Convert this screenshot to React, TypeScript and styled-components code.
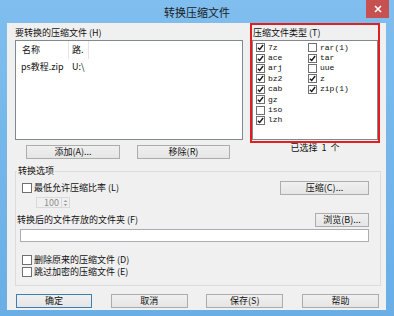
import styled, { createGlobalStyle } from 'styled-components';

const GlobalStyle = createGlobalStyle`
  html, body {
    margin: 0;
    padding: 0;
  }
  body {
    width: 394px;
    height: 316px;
    overflow: hidden;
    font-family: "Noto Sans CJK SC", "Noto Sans", sans-serif;
    font-size: 9px;
    color: #111;
  }
  * {
    box-sizing: border-box;
  }
`;

const Window = styled.div`
  width: 394px;
  height: 316px;
  display: flex;
  flex-direction: column;
  background: linear-gradient(#7fbeee, #6aaee6);
`;

const TitleBar = styled.div`
  height: 23px;
  display: grid;
  grid-template-columns: 1fr auto 1fr;
  align-items: start;
`;

const Title = styled.div`
  grid-column: 2;
  font-size: 11px;
  line-height: 25px;
  color: #1b1b1b;
`;

const CloseButton = styled.div`
  grid-column: 3;
  justify-self: end;
  margin-right: 5px;
  width: 23px;
  height: 18px;
  background: #c75050;
  display: flex;
  align-items: center;
  justify-content: center;
`;

const Client = styled.div`
  margin: 0 8px 6px 7px;
  height: 287px;
  background: #f0f0f0;
`;

const Columns = styled.div`
  display: grid;
  grid-template-columns: 228px 130px;
  column-gap: 7px;
  padding-left: 8px;
`;

const Caption = styled.div`
  line-height: 12px;
  white-space: nowrap;
`;

const LeftPanel = styled.div`
  padding-top: 4px;
  display: flex;
  flex-direction: column;
  gap: 1px;
`;

const ListBox = styled.div<{ $height: number }>`
  height: ${(p) => p.$height}px;
  border: 1px solid #828790;
  background: #fff;
`;

const ListRow = styled.div<{ $height: number }>`
  display: grid;
  grid-template-columns: 53px 20px 1fr;
  height: ${(p) => p.$height}px;
  line-height: ${(p) => p.$height}px;
`;

const HeaderCell = styled.div`
  border-right: 1px solid #e5e5e5;
  padding-left: 6px;
  white-space: nowrap;
  overflow: hidden;
  &:nth-child(2) {
    padding-left: 3px;
  }
  &:last-child {
    border-right: none;
  }
`;

const Cell = styled.div<{ $pad: number }>`
  padding-left: ${(p) => p.$pad}px;
  white-space: nowrap;
`;

const RedBox = styled.div`
  height: 120px;
  border: 2px solid #e02020;
  padding-top: 2px;
  display: flex;
  flex-direction: column;
  gap: 1px;
`;

const RedCaption = styled(Caption)`
  padding-left: 1px;
`;

const TypeGrid = styled.div`
  display: grid;
  grid-template-columns: 52px 1fr;
  grid-template-rows: repeat(8, 10.4px);
  grid-auto-flow: column;
  padding: 1.5px 0 0 3px;
  font-family: "Liberation Mono", monospace;
  font-size: 8px;
`;

const CheckItem = styled.label<{ $size: number }>`
  display: flex;
  align-items: center;
  gap: ${(p) => (p.$size > 9 ? 2 : 3)}px;
  white-space: nowrap;
  line-height: 10px;
`;

const Box = styled.span<{ $size: number }>`
  width: ${(p) => p.$size}px;
  height: ${(p) => p.$size}px;
  border: 1px solid #707070;
  background: #fff;
  display: flex;
  align-items: center;
  justify-content: center;
  flex: none;
`;

const ButtonRow = styled.div`
  display: flex;
  gap: 17px;
  padding-left: 11px;
`;

const Button = styled.div<{ $width: number; $default?: boolean }>`
  width: ${(p) => p.$width}px;
  height: 14px;
  border: 1px solid ${(p) => (p.$default ? '#3c7fb1' : '#acacac')};
  background: linear-gradient(#f0f0f0, #e5e5e5);
  display: flex;
  align-items: center;
  justify-content: center;
  line-height: 12px;
  white-space: nowrap;
`;

const SelectedCount = styled.div`
  text-align: center;
  line-height: 12px;
  margin-top: -3px;
  word-spacing: 2px;
`;

const MiddleRow = styled(Columns)`
  margin-top: 2px;
`;

const Group = styled.fieldset`
  margin: 6px 0 0 8px;
  width: 366px;
  height: 121px;
  padding: 0 11px 0 1px;
  border: 1px solid #dcdcdc;
  min-width: 0;
`;

const Legend = styled.legend`
  padding: 0 1px;
  line-height: 12px;
`;

const GroupBody = styled.div`
  display: flex;
  flex-direction: column;
`;

const SplitRow = styled.div<{ $top: number; $indent: number }>`
  display: flex;
  justify-content: space-between;
  align-items: center;
  margin-top: ${(p) => p.$top}px;
  padding-left: ${(p) => p.$indent}px;
`;

const Spinner = styled.div`
  margin: 2px 0 0 19px;
  width: 34px;
  height: 11px;
  border: 1px solid #d9d9d9;
  background: #f0f0f0;
  display: flex;
  color: #8d8d8d;
  line-height: 9px;
`;

const SpinValue = styled.div`
  flex: 1;
  text-align: right;
  padding-right: 2px;
`;

const SpinArrows = styled.div`
  width: 8px;
  border-left: 1px solid #d9d9d9;
  display: flex;
  align-items: center;
  justify-content: center;
`;

const TextField = styled.div`
  margin: 2px 0 0 3px;
  height: 13px;
  border: 1px solid #abadb3;
  background: #fff;
`;

const OptionRow = styled.div<{ $top: number }>`
  height: 12px;
  margin-top: ${(p) => p.$top}px;
  padding-left: 5px;
  display: flex;
  align-items: center;
`;

const Footer = styled.div`
  display: flex;
  justify-content: space-between;
  margin-top: 8px;
  padding: 0 7px 0 9px;
`;

function Check({ checked, size = 9 }: { checked?: boolean; size?: number }) {
  return (
    <Box $size={size}>
      {checked && (
        <svg width={size - 2} height={size - 2} viewBox="0 0 8 8">
          <path d="M1 4.2 L3.1 6.3 L7 1.2" fill="none" stroke="#1a1a1a" strokeWidth="1.6" />
        </svg>
      )}
    </Box>
  );
}

function CheckOption({ label, checked, size = 9 }: { label: string; checked?: boolean; size?: number }) {
  return (
    <CheckItem $size={size}>
      <Check checked={checked} size={size} />
      {label}
    </CheckItem>
  );
}

const types: [string, boolean][] = [
  ['7z', true],
  ['ace', true],
  ['arj', true],
  ['bz2', true],
  ['cab', true],
  ['gz', true],
  ['iso', false],
  ['lzh', true],
  ['rar(1)', false],
  ['tar', true],
  ['uue', false],
  ['z', true],
  ['zip(1)', true],
];

export default function App() {
  return (
    <>
      <GlobalStyle />
      <Window>
        <TitleBar>
          <Title>转换压缩文件</Title>
          <CloseButton>
            <svg width="8" height="8" viewBox="0 0 8 8">
              <path d="M1 1 L7 7 M7 1 L1 7" stroke="#fff" strokeWidth="1.6" />
            </svg>
          </CloseButton>
        </TitleBar>
        <Client>
          <Columns>
            <LeftPanel>
              <Caption>要转换的压缩文件 (H)</Caption>
              <ListBox $height={100}>
                <ListRow $height={18}>
                  <HeaderCell>名称</HeaderCell>
                  <HeaderCell>路.</HeaderCell>
                  <HeaderCell />
                </ListRow>
                <ListRow $height={14} style={{ marginTop: 1 }}>
                  <Cell $pad={5}>ps教程.zip</Cell>
                  <Cell $pad={3}>U:\</Cell>
                  <Cell $pad={0} />
                </ListRow>
              </ListBox>
            </LeftPanel>
            <RedBox>
              <RedCaption>压缩文件类型 (T)</RedCaption>
              <ListBox $height={100}>
                <TypeGrid>
                  {types.map(([name, on]) => (
                    <CheckOption key={name} label={name} checked={on} size={9} />
                  ))}
                </TypeGrid>
              </ListBox>
            </RedBox>
          </Columns>

          <MiddleRow>
            <ButtonRow>
              <Button $width={94}>添加(A)...</Button>
              <Button $width={93}>移除(R)</Button>
            </ButtonRow>
            <SelectedCount>已选择 1 个</SelectedCount>
          </MiddleRow>

          <Group>
            <Legend>转换选项</Legend>
            <GroupBody>
              <SplitRow $top={4} $indent={5}>
                <CheckOption label="最低允许压缩比率 (L)" size={10} />
                <Button $width={89}>压缩(C)...</Button>
              </SplitRow>
              <Spinner>
                <SpinValue>100</SpinValue>
                <SpinArrows>
                  <svg width="5" height="8" viewBox="0 0 5 8">
                    <path d="M0.5 3 L2.5 1 L4.5 3 Z M0.5 5 L2.5 7 L4.5 5 Z" fill="#a0a0a0" />
                  </svg>
                </SpinArrows>
              </Spinner>
              <SplitRow $top={5} $indent={0}>
                <Caption>转换后的文件存放的文件夹 (F)</Caption>
                <Button $width={54}>浏览(B)...</Button>
              </SplitRow>
              <TextField />
              <OptionRow $top={12}>
                <CheckOption label="删除原来的压缩文件 (D)" size={10} />
              </OptionRow>
              <OptionRow $top={0}>
                <CheckOption label="跳过加密的压缩文件 (E)" size={10} />
              </OptionRow>
            </GroupBody>
          </Group>

          <Footer>
            <Button $width={76} $default>确定</Button>
            <Button $width={77}>取消</Button>
            <Button $width={77}>保存(S)</Button>
            <Button $width={77}>帮助</Button>
          </Footer>
        </Client>
      </Window>
    </>
  );
}
